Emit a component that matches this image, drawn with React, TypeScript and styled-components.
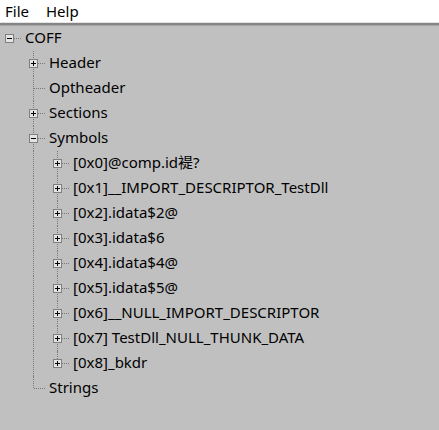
import React from "react";
import styled, { createGlobalStyle } from "styled-components";

const Global = createGlobalStyle`
  html, body { margin: 0; padding: 0; background: #c0c0c0; }
  body { font-family: "Noto Sans", "Noto Sans CJK SC", sans-serif; }
`;

type Node = { label: string; children?: Node[]; expanded?: boolean; plus?: boolean };

const tree: Node = {
  label: "COFF",
  expanded: true,
  children: [
    { label: "Header", plus: true },
    { label: "Optheader" },
    { label: "Sections", plus: true },
    {
      label: "Symbols",
      expanded: true,
      children: [
        "[0x0]@comp.id褆?",
        "[0x1]__IMPORT_DESCRIPTOR_TestDll",
        "[0x2].idata$2@",
        "[0x3].idata$6",
        "[0x4].idata$4@",
        "[0x5].idata$5@",
        "[0x6]__NULL_IMPORT_DESCRIPTOR",
        "[0x7] TestDll_NULL_THUNK_DATA",
        "[0x8]_bkdr",
      ].map((l) => ({ label: l, plus: true })),
    },
    { label: "Strings" },
  ],
};

const Window = styled.div`
  width: 439px;
  height: 430px;
  background: #c0c0c0;
  overflow: hidden;
  display: flex;
  flex-direction: column;
`;

const MenuBar = styled.div`
  height: 22px;
  background: #ffffff;
  display: flex;
  align-items: center;
  gap: 17px;
  padding-left: 5px;
  font-size: 15px;
  color: #000;
  border-bottom: 1px solid #e4e4e4;
`;

const MenuItem = styled.span`
  line-height: 22px;
  padding-bottom: 1px;
`;

const MenuEdge = styled.div`
  height: 2px;
  background: #858585;
  border-bottom: 1px solid #a4a4a4;
`;

const TreeArea = styled.div`
  display: flex;
  flex-direction: column;
`;

const Row = styled.div`
  height: 25px;
  display: flex;
  align-items: stretch;
`;

const Guide = styled.div<{ $line: boolean }>`
  width: 24px;
  flex: none;
  position: relative;
  &::before {
    content: "";
    display: ${(p) => (p.$line ? "block" : "none")};
    position: absolute;
    left: 9px;
    top: 0;
    bottom: 0;
    border-left: 1px dotted #7a7a7a;
  }
`;

const Own = styled.div<{ $up: boolean; $down: boolean }>`
  width: 16px;
  flex: none;
  position: relative;
  &::before {
    content: "";
    display: ${(p) => (p.$up || p.$down ? "block" : "none")};
    position: absolute;
    left: 9px;
    top: ${(p) => (p.$up ? "0" : "12px")};
    height: ${(p) => (p.$up && p.$down ? "25px" : "12px")};
    border-left: 1px dotted #7a7a7a;
  }
  &::after {
    content: "";
    position: absolute;
    left: 10px;
    width: 11px;
    top: 12px;
    border-top: 1px dotted #7a7a7a;
  }
`;

const Box = styled.span`
  position: absolute;
  left: 5px;
  top: 8px;
  width: 7px;
  height: 7px;
  border: 1px solid #7f7f7f;
  background: #e4e4e4;
  z-index: 1;
`;

const SignH = styled.span`
  position: absolute;
  left: 1px;
  top: 3px;
  width: 5px;
  height: 1px;
  background: #000;
`;

const SignV = styled.span`
  position: absolute;
  left: 3px;
  top: 1px;
  width: 1px;
  height: 5px;
  background: #000;
`;

const Label = styled.span`
  margin-left: 9px;
  font-size: 15px;
  line-height: 25px;
  color: #000;
  white-space: nowrap;
  position: relative;
  top: -1px;
`;

type Flat = {
  node: Node;
  level: number;
  guides: boolean[];
  up: boolean;
  down: boolean;
};

function flatten(node: Node, level: number, guides: boolean[], hasPrev: boolean, hasNext: boolean, out: Flat[]) {
  out.push({ node, level, guides, up: level > 0 || hasPrev, down: hasNext });
  if (node.expanded && node.children) {
    node.children.forEach((c, i) => {
      flatten(c, level + 1, [...guides, hasNext], i > 0, i < node.children!.length - 1, out);
    });
  }
}

export default function App() {
  const rows: Flat[] = [];
  flatten(tree, 0, [], false, false, rows);
  return (
    <Window>
      <Global />
      <MenuBar>
        <MenuItem>File</MenuItem>
        <MenuItem>Help</MenuItem>
      </MenuBar>
      <MenuEdge />
      <TreeArea>
        {rows.map((r, i) => (
          <Row key={i}>
            {r.guides.map((g, j) => (
              <Guide key={j} $line={g} />
            ))}
            <Own $up={r.up} $down={r.down}>
              {(r.node.plus || r.node.expanded) && (
                <Box>
                  <SignH />
                  {!r.node.expanded && <SignV />}
                </Box>
              )}
            </Own>
            <Label>{r.node.label}</Label>
          </Row>
        ))}
      </TreeArea>
    </Window>
  );
}
